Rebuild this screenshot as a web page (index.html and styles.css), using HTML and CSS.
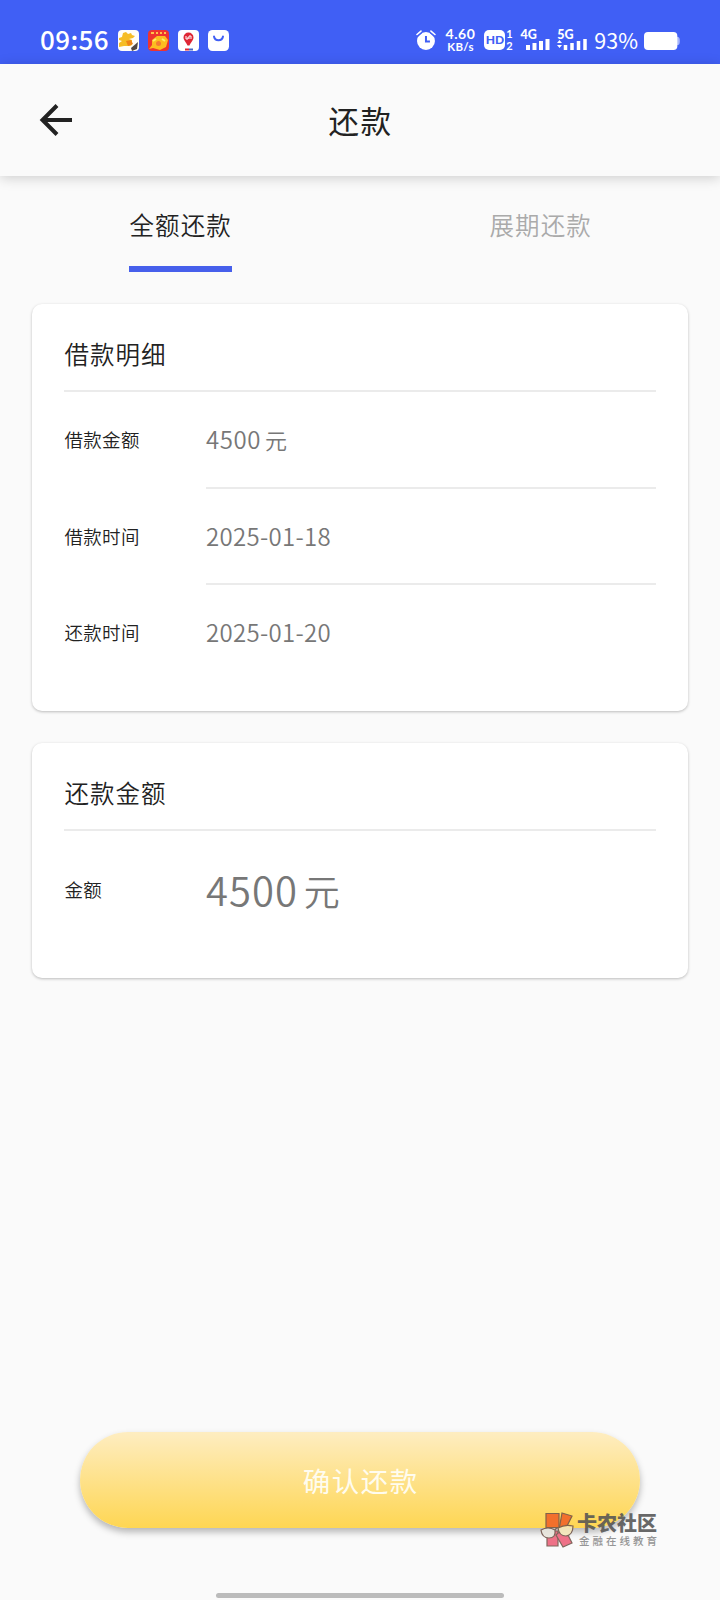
FILE: index.html
```html
<!DOCTYPE html>
<html lang="zh-CN">
<head>
<meta charset="utf-8">
<title>还款</title>
<link rel="stylesheet" href="styles.css">
</head>
<body>
<div class="screen">
  <div class="status">
    <span class="clock">09:56</span>
    <div class="apps">
      <svg width="21" height="21" viewBox="0 0 21 21"><rect width="21" height="21" rx="4" fill="#fffdf8"/><path d="M1 8l3-1 1-4 3-1 2 2 3-1 1 2 3 1-2 2-4 1 3 1v5l-2 1H6l-5 1v-4l3-2-3-1z" fill="#f6bd25"/><path d="M8 11l5-1 2 4-5 2z" fill="#ef8417"/><path d="M13 18l7-6-1 7-5 2z" fill="#514845"/></svg>
      <svg width="21" height="21" viewBox="0 0 21 21"><rect width="21" height="21" rx="4" fill="#ee342f"/><path d="M3 3h3m2 0h2m2 0h2m2 0h2" stroke="#ffc34b" stroke-width="2"/><path d="M4 10l5-4 8 0 3 4-2 7-6 3-7-2-4 1 3-4z" fill="#fdbd20"/><circle cx="10.500" cy="13.500" r="2.500" fill="#f57b31"/><path d="M5 11l3-2m6 0l3 2" stroke="#ffee65" stroke-width="2"/></svg>
      <svg width="21" height="21" viewBox="0 0 21 21"><rect width="21" height="21" rx="4" fill="#fff"/><path d="M10.500 2.500a5 5 0 0 1 5 5c0 3-3 5-4 8h-2c-1-3-4-5-4-8a5 5 0 0 1 5-5z" fill="#df2635"/><path d="M8 6v3h2V7m1 2V6h2v3" fill="none" stroke="#fff"/><path d="M7 19.500h4" stroke="#df2635" stroke-width="2"/><path d="M11 19.500h4" stroke="#4668c4" stroke-width="2"/></svg>
      <svg width="21" height="21" viewBox="0 0 21 21"><rect width="21" height="21" rx="4.500" fill="#fff"/><path d="M6 6.500c1 5 8 5 9 0" fill="none" stroke="#405ff5" stroke-width="2" stroke-linecap="round"/></svg>
    </div>
    <svg class="alarm" width="20" height="20" viewBox="0 0 20 20"><circle cx="10" cy="11" r="9" fill="#fff"/><path d="M1 5l4-3.500M19 5l-4-3.500" stroke="#405ff5" stroke-width="4"/><path d="M1 4.500l4-3.500M19 4.500l-4-3.500" stroke="#fff" stroke-width="1.600" stroke-linecap="round"/><path d="M10 6v5.500h4" fill="none" stroke="#405ff5" stroke-width="2"/></svg>
    <div class="speed"><span>4.60</span><span>KB/s</span></div>
    <div class="hd"><span class="hd-box">HD</span><span class="sims"><span>1</span><span>2</span></span></div>
    <div class="signal"><span>4G</span><svg width="24" height="11" viewBox="0 0 24 11"><path d="M2 6v5M8.500 4v7M15 2v9M21.500 0v11" stroke="#fff" stroke-width="4"/></svg></div>
    <div class="signal"><span>5G</span><svg width="30" height="11" viewBox="0 0 30 11"><path d="M0 4l2.500-3L5 4zM0 6h5l-2.500 3z" fill="#fff"/><path d="M8.500 6v5M15 4v7M21.500 2v9M28 0v11" stroke="#fff" stroke-width="3.500"/></svg></div>
    <span class="percent">93%</span>
    <svg class="battery" width="36" height="18" viewBox="0 0 36 18"><path d="M32 5h2q2 0 2 4t-2 4h-2z" fill="#a6b6fb"/><rect width="33.500" height="18" rx="4" fill="#fff"/></svg>
  </div>
  <header class="header">
    <svg class="back" width="34" height="34" viewBox="0 0 34 34"><path d="M18 2.500L3.500 17 18 31.500M3.500 17H33" fill="none" stroke="#222" stroke-width="4"/></svg>
    <h1 class="title">还款</h1>
  </header>
  <nav class="tabs">
    <div class="tab active"><span>全额还款</span></div>
    <div class="tab"><span>展期还款</span></div>
  </nav>
  <section class="card details">
    <h2 class="card-title">借款明细</h2>
    <div class="row"><span class="label">借款金额</span><span class="value">4500<span class="unit">元</span></span></div>
    <div class="row"><span class="label">借款时间</span><span class="value date">2025-01-18</span></div>
    <div class="row"><span class="label">还款时间</span><span class="value date">2025-01-20</span></div>
  </section>
  <section class="card amount">
    <h2 class="card-title">还款金额</h2>
    <div class="row"><span class="label">金额</span><span class="value big">4500<span class="unit">元</span></span></div>
  </section>
  <button class="confirm">确认还款</button>
  <div class="brand">
    <svg width="34" height="36" viewBox="0 0 34 36"><g stroke="#705348" stroke-width="1.200"><path d="M6 1.500h13v14H6z" fill="#f16226"/><path d="M22 1l10 3-7 14h-6z" fill="#f16226"/><path d="M7 19h11v15H7z" fill="#ed5f78"/><path d="M18 21l8-2 6 12-9 4-7-12z" fill="#ed5f78"/><path d="M1 18q7-4 14 0 1 8-6 8Q2 26 1 18z" fill="#e8e5dc"/><path d="M18 16q7-4 15-2 0 9-7 10-7 0-8-8z" fill="#f6e8b8"/><path d="M15 18q2-3 3-2" fill="none"/></g></svg>
    <div class="brand-text"><span class="brand-name">卡农社区</span><span class="brand-tag">金融在线教育</span></div>
  </div>
  <div class="home-bar"></div>
</div>
</body>
</html>
```
FILE: styles.css
```css
* { box-sizing: border-box; }
body { margin: 0; background: #fafafa; font-family: "Noto Sans CJK SC", sans-serif; color: #222; }
.screen { position: relative; width: 720px; height: 1600px; overflow: hidden; display: flex; flex-direction: column; font-weight: 350; }
.status { height: 64px; flex: none; background: #405ff5; color: #fff; display: flex; align-items: center; padding: 16px 40px 0 40px; font-family: Lato, sans-serif; font-weight: 400; }
.clock { width: 78px; margin-top: -3px; font-size: 26px; line-height: 32px; font-weight: 500; letter-spacing: 0.4px; white-space: nowrap; font-family: "Noto Sans CJK SC", sans-serif; }
.apps { display: flex; gap: 9px; }
.alarm { margin-left: 187px; }
.speed { width: 34px; margin-left: 8px; display: flex; flex-direction: column; align-items: center; font-size: 14px; line-height: 14px; font-weight: 700; white-space: nowrap; letter-spacing: 0.6px; }
.speed span + span { font-size: 11.500px; line-height: 12px; letter-spacing: 0.3px; }
.hd { display: flex; align-items: center; margin-left: 7px; }
.hd-box { width: 21px; height: 20px; border-radius: 5px; background: #fff; color: #405ff5; font-size: 12px; line-height: 20px; font-weight: 900; text-align: center; }
.sims { width: 8px; display: flex; flex-direction: column; font-size: 11px; line-height: 12px; font-weight: 700; text-align: center; }
.signal { width: 30px; height: 20px; margin-left: 7px; display: flex; flex-direction: column; align-items: flex-end; font-size: 12.500px; line-height: 10px; font-weight: 900; }
.signal span { align-self: flex-start; }
.signal svg { flex: none; margin-top: -1px; }
.percent { width: 44px; margin: 0 0 0 7px; font-size: 21.500px; line-height: 28px; font-family: "Noto Sans CJK SC", sans-serif; }
.battery { margin: 1px 0 0 6px; }
.header { height: 112px; flex: none; display: grid; grid-template-columns: 34px 1fr 34px; align-items: center; padding: 0 39px; box-shadow: 0 2px 12px rgba(0,0,0,.18); }
.title { margin: -1px 0 0 1px; font-size: 30.500px; line-height: 44px; font-weight: 400; letter-spacing: 1.5px; text-align: center; }
.tabs { height: 96px; flex: none; display: grid; grid-template-columns: 1fr 1fr; justify-items: center; }
.tab { width: 103px; height: 96px; padding-top: 31px; font-size: 24.500px; line-height: 36px; letter-spacing: 1.1px; color: #aaa; white-space: nowrap; text-indent: 1px; }
.active { color: #222; border-bottom: 6px solid #465feb; }
.card { flex: none; margin: 32px 32px 0; padding: 0 32px; border-radius: 10px; background: #fff; box-shadow: 0 1px 3px rgba(0,0,0,.25); }
.details { height: 407px; }
.amount { height: 235px; }
.card-title { height: 88px; margin: 0; padding-top: 30.500px; border-bottom: 2px solid #ebebeb; font-size: 24.500px; line-height: 38px; font-weight: 350; letter-spacing: 1px; text-indent: 0.5px; }
.row { display: grid; grid-template-columns: 142px 1fr; grid-template-rows: 100%; height: 96.500px; line-height: 95px; }
.label { font-size: 18.500px; letter-spacing: 0.3px; text-indent: 0.5px; }
.value { font-size: 24px; color: #777; letter-spacing: 0.6px; line-height: 94px; border-bottom: 2px solid #ebebeb; }
.date { letter-spacing: 0.3px; }
.row:last-child .value { border: 0; }
.unit { font-size: 22px; margin-left: 4px; }
.amount .row { height: 118px; line-height: 116px; }
.big { font-size: 40px; line-height: 116px; letter-spacing: 1px; }
.big .unit { font-size: 36px; margin-left: 6px; }
.confirm { position: absolute; left: 80px; top: 1432px; width: 560px; height: 96px; border: 0; border-radius: 48px; background: linear-gradient(#feedc1, #fed653); box-shadow: 0 4px 7px rgba(0,0,0,.28); color: #fffcef; font: 400 27.500px/94px "Noto Sans CJK SC", sans-serif; letter-spacing: 1.5px; text-indent: 1.500px; padding: 0; }
.brand { position: absolute; left: 540px; top: 1512px; display: flex; gap: 3px; opacity: .88; color: #555; }
.brand-text { display: flex; flex-direction: column; white-space: nowrap; }
.brand-name { font-size: 20px; line-height: 22px; font-weight: 900; }
.brand-tag { padding-left: 2px; font-size: 10.500px; line-height: 13px; font-weight: 500; letter-spacing: 3px; color: #888; }
.home-bar { position: absolute; left: 216px; top: 1593px; width: 288px; height: 5px; border-radius: 3px; background: #bbb; }
```
